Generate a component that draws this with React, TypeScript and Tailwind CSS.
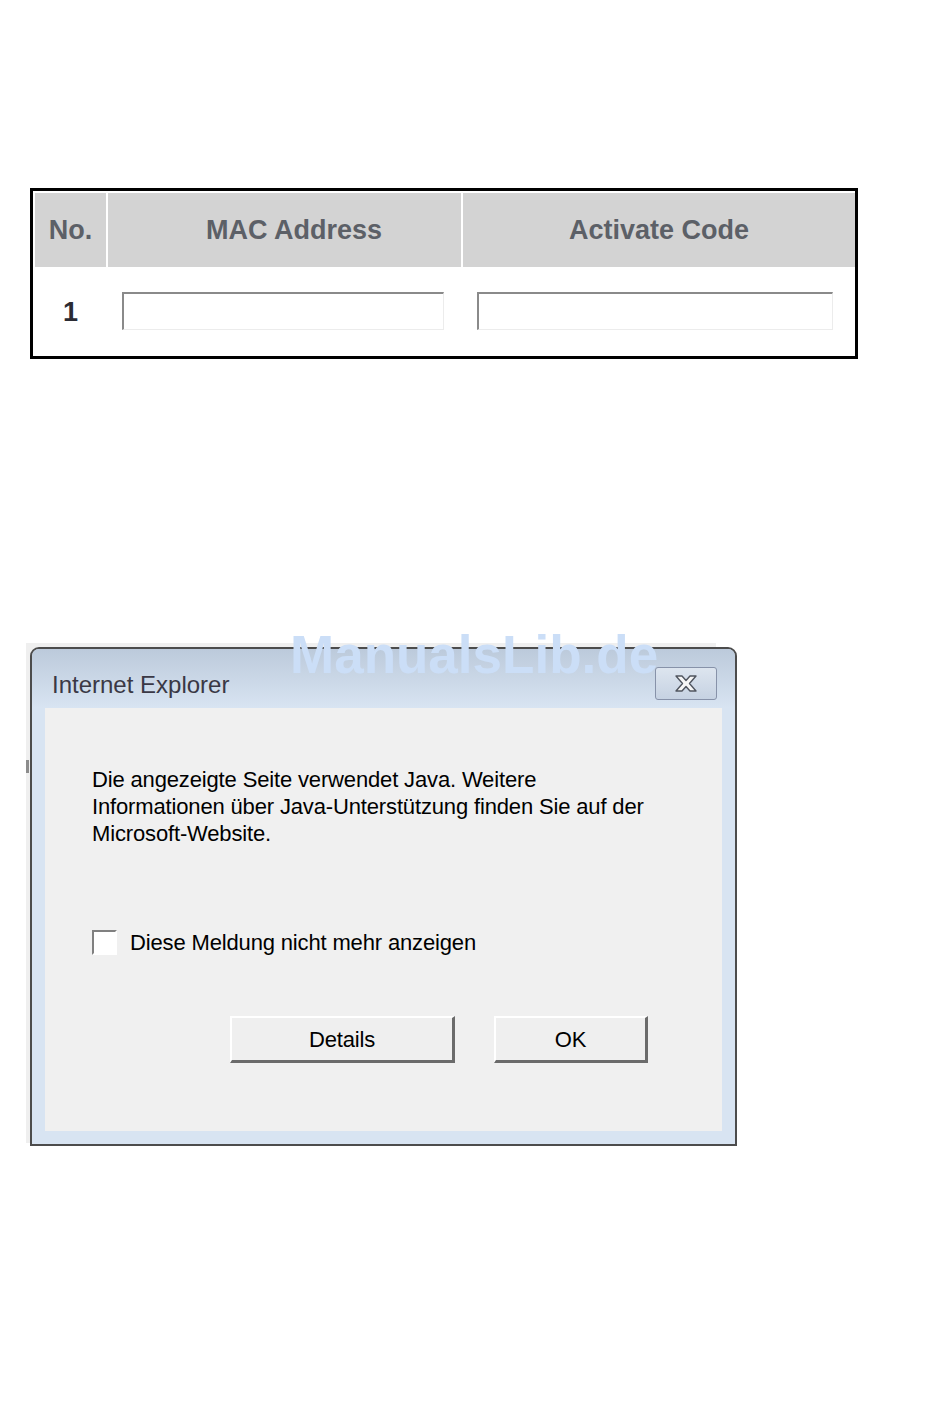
import React from "react";

const sans = { fontFamily: '"Liberation Sans", Arial, sans-serif' };

const SunkenInput = ({ width }: { width: string }) => (
  <div
    className={`${width} h-[38px] bg-white border-t-2 border-l-2 border-b border-r border-t-[#8a8a8a] border-l-[#8a8a8a] border-b-[#ececec] border-r-[#ececec]`}
  />
);

const WinButton = ({ label, width }: { label: string; width: string }) => (
  <div
    className={`${width} h-[47px] flex items-center justify-center bg-[#efefef] border-t-2 border-l-2 border-b-[3px] border-r-[3px] border-t-white border-l-white border-b-[#6b6b6b] border-r-[#6b6b6b] text-[22px] tracking-[-0.15px] text-black`}
  >
    {label}
  </div>
);

export default function App() {
  return (
    <div className="w-[950px] min-h-[1414px] bg-white relative" style={sans}>
      {/* activation table */}
      <div className="ml-[30px] pt-[188px]">
        <div className="w-[828px] border-[3px] border-black p-[2px] pr-0">
          <div className="flex h-[74px] gap-[2px] text-[27px] font-bold text-[#5c6067]">
            <div className="w-[71px] bg-[#d3d3d3] flex items-center justify-center">No.</div>
            <div className="w-[353px] bg-[#d3d3d3] flex items-center justify-center pl-[19px]">MAC Address</div>
            <div className="flex-1 bg-[#d3d3d3] flex items-center justify-center">Activate Code</div>
          </div>
          <div className="flex items-center h-[87px] gap-[2px]">
            <div className="w-[71px] pt-[4px] text-center text-[27px] font-bold text-[#2b2b33]">1</div>
            <div className="w-[353px] pl-[14px]">
              <SunkenInput width="w-[322px]" />
            </div>
            <div className="flex-1 pl-[14px]">
              <SunkenInput width="w-[356px]" />
            </div>
          </div>
        </div>
      </div>

      {/* dialog */}
      <div className="relative mt-[284px] ml-[26px] w-[690px] h-[500px] bg-[#efefef] pt-[4px] pl-[4px]">
        <div className="absolute left-0 top-[117px] w-[3px] h-[13px] bg-[#8c8c8c]" />
        <div className="w-[707px] h-[499px] border-2 border-[#4c4c4c] rounded-t-[9px] bg-[#d8e4f2] flex flex-col overflow-hidden">
          <div className="h-[59px] shrink-0 bg-gradient-to-b from-[#bccadb] to-[#d8e4f2] flex items-start justify-between pl-[20px] pr-[18px]">
            <span className="mt-[23px] text-[24px] leading-[26px] text-[#3a3845]">Internet Explorer</span>
            <div className="mt-[18px] w-[62px] h-[33px] rounded-[3px] border border-[#8792a9] bg-gradient-to-b from-[#dde5ef] to-[#c6d2e2] flex items-center justify-center">
              <svg width="22" height="17" viewBox="0 0 22 17">
                <path
                  d="M1 1h6l4 4.5L15 1h6l-6.5 7.5L21 16h-6l-4-4.5L7 16H1l6.5-7.5z"
                  fill="#f6f6f6"
                  stroke="#50555f"
                  strokeWidth="1.4"
                  strokeLinejoin="round"
                />
              </svg>
            </div>
          </div>
          <div className="mx-[13px] h-[423px] bg-[#f0f0f0] pl-[47px] pt-[58px] text-[22px] tracking-[-0.15px] text-black">
            <p className="leading-[27px]">
              Die angezeigte Seite verwendet Java. Weitere
              <br />
              Informationen über Java-Unterstützung finden Sie auf der
              <br />
              Microsoft-Website.
            </p>
            <div className="mt-[83px] flex items-center gap-[13px] h-[25px]">
              <div className="w-[25px] h-[25px] bg-white border-2 border-t-[#808080] border-l-[#808080] border-b-white border-r-white" />
              <span className="leading-[25px]">Diese Meldung nicht mehr anzeigen</span>
            </div>
            <div className="mt-[61px] ml-[138px] flex gap-[39px]">
              <WinButton label="Details" width="w-[225px]" />
              <WinButton label="OK" width="w-[154px]" />
            </div>
          </div>
        </div>
        {/* watermark */}
        <div className="absolute left-[264px] top-[-15px] text-[53px] leading-none font-bold text-[#cbdef7] whitespace-nowrap">
          ManualsLib.de
        </div>
      </div>
    </div>
  );
}
